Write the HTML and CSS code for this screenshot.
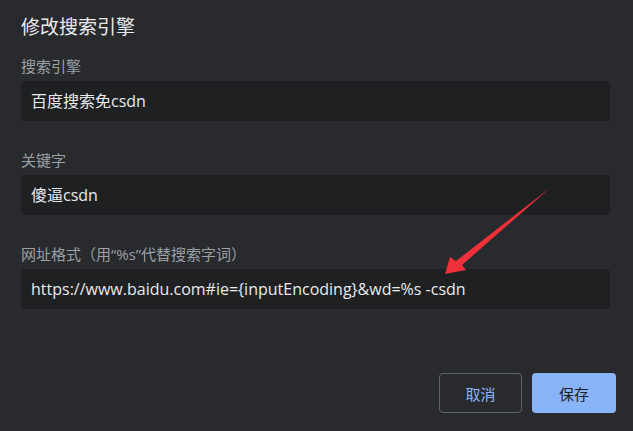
FILE: index.html
```html
<!DOCTYPE html>
<html lang="zh-CN">
<head>
<meta charset="utf-8">
<link rel="stylesheet" href="styles.css">
</head>
<body>
<div class="dialog">
  <h1 class="title">修改搜索引擎</h1>
  <div class="field">
    <div class="label">搜索引擎</div>
    <div class="input">百度搜索免csdn</div>
  </div>
  <div class="field">
    <div class="label">关键字</div>
    <div class="input">傻逼csdn</div>
  </div>
  <div class="field">
    <div class="label">网址格式（用“%s”代替搜索字词）</div>
    <div class="input">https://www.baidu.com#ie={inputEncoding}&amp;wd=%s -csdn</div>
  </div>
  <div class="actions">
    <button class="btn cancel">取消</button>
    <button class="btn save">保存</button>
  </div>
  <svg class="arrow" width="633" height="431" viewBox="0 0 633 431">
    <polygon points="550,188 462,265 466,270 445,274 450,257 456,261" fill="#ee3038"/>
  </svg>
</div>
</body>
</html>
```
FILE: styles.css
```css
html, body {
  margin: 0;
  padding: 0;
  background: #292a2d;
}
body {
  width: 633px;
  height: 431px;
  overflow: hidden;
  font-family: "Open Sans", "Noto Sans CJK SC", sans-serif;
}
.dialog {
  position: relative;
  padding: 12px 23px 0 21px;
  height: 419px;
}
.title {
  margin: 0 0 14px;
  font-size: 19px;
  line-height: 30px;
  font-weight: normal;
  color: #e8eaed;
}
.field {
  display: flex;
  flex-direction: column;
  gap: 5px;
  margin-bottom: 29px;
}
.label {
  font-size: 15px;
  line-height: 20px;
  color: #9aa0a6;
}
.input {
  height: 40px;
  line-height: 40px;
  padding-left: 10px;
  border-radius: 4px;
  background: #1f2022;
  color: #e8eaed;
  font-size: 16px;
}
.actions {
  display: flex;
  justify-content: flex-end;
  gap: 10px;
  margin-top: 64px;
  margin-right: -6px;
}
.btn {
  height: 40px;
  padding: 0;
  border-radius: 4px;
  font-family: "Open Sans", "Noto Sans CJK SC", sans-serif;
  font-size: 15px;
  cursor: pointer;
}
.cancel {
  width: 83px;
  background: transparent;
  border: 1px solid #5f6368;
  color: #8ab4f8;
}
.save {
  width: 84px;
  background: #8ab4f8;
  border: none;
  color: #202124;
}
.arrow {
  position: absolute;
  left: 0;
  top: 0;
  pointer-events: none;
}
```
